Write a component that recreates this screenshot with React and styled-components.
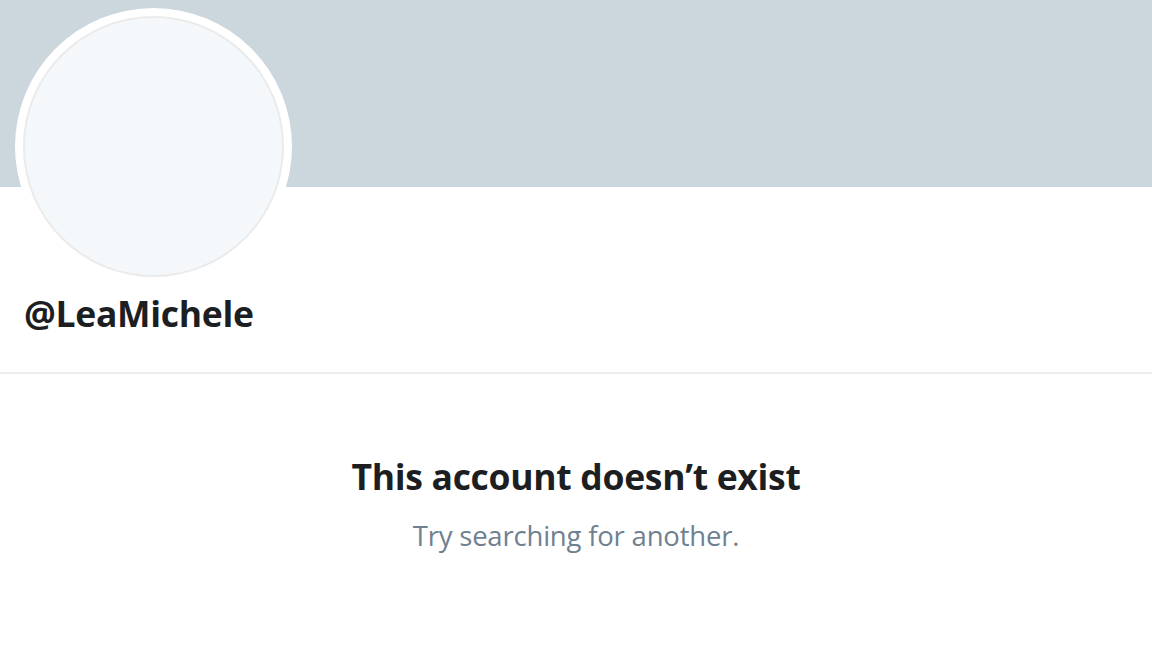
import React from "react";
import styled, { createGlobalStyle } from "styled-components";

const Global = createGlobalStyle`
  html, body { margin: 0; padding: 0; background: #ffffff; }
  body { font-family: "Open Sans", "Noto Sans", sans-serif; }
`;

const Page = styled.div`
  width: 1152px;
  height: 648px;
  overflow: hidden;
  background: #ffffff;
`;

const Banner = styled.div`
  height: 187px;
  background: #ccd6dd;
`;

const ProfileHeader = styled.div`
  display: flex;
  flex-direction: column;
  align-items: flex-start;
  padding: 0 0 0 15px;
  border-bottom: 2px solid #ebeef0;
  height: 187px;
  box-sizing: border-box;
`;

const Avatar = styled.div`
  width: 277px;
  height: 277px;
  flex: none;
  margin-top: -179px;
  border-radius: 50%;
  background: #ffffff;
  padding: 8px;
  box-sizing: border-box;
`;

const AvatarInner = styled.div`
  width: 100%;
  height: 100%;
  border-radius: 50%;
  background: #f5f8fb;
  box-shadow: inset 0 0 0 2px #ebebeb;
`;

const Handle = styled.div`
  margin: 6px 0 0 9px;
  font-size: 35.5px;
  font-weight: 700;
  color: #1c1e21;
  line-height: 44px;
  letter-spacing: -0.3px;
`;

const Empty = styled.div`
  display: flex;
  flex-direction: column;
  align-items: center;
  padding-top: 80px;
`;

const Title = styled.div`
  font-size: 35.5px;
  font-weight: 700;
  color: #1c1e21;
  line-height: 44px;
  letter-spacing: -0.3px;
`;

const Subtitle = styled.div`
  margin-top: 20px;
  font-size: 27.5px;
  color: #6f8191;
  line-height: 36px;
  letter-spacing: -0.2px;
`;

export default function App() {
  return (
    <Page>
      <Global />
      <Banner />
      <ProfileHeader>
        <Avatar>
          <AvatarInner />
        </Avatar>
        <Handle>@LeaMichele</Handle>
      </ProfileHeader>
      <Empty>
        <Title>This account doesn’t exist</Title>
        <Subtitle>Try searching for another.</Subtitle>
      </Empty>
    </Page>
  );
}
